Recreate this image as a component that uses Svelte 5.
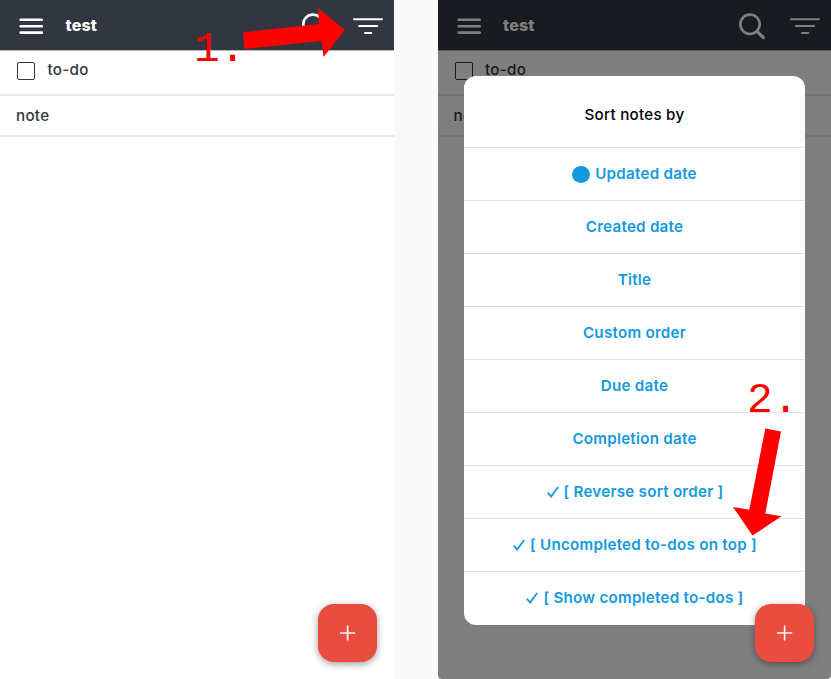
<script>
  const options = [
    { label: 'Updated date', selected: true },
    { label: 'Created date' },
    { label: 'Title' },
    { label: 'Custom order' },
    { label: 'Due date' },
    { label: 'Completion date' },
    { label: '[ Reverse sort order ]', checked: true },
    { label: '[ Uncompleted to-dos on top ]', checked: true },
    { label: '[ Show completed to-dos ]', checked: true }
  ];
</script>

{#snippet screen()}
  <header>
    <svg class="menu" width="24" height="17" viewBox="0 0 24 17">
      <path d="M1.7 1.8H22.9M1.7 8.2H22.9M1.7 14.6H22.9" stroke="#fff" stroke-width="2.6" stroke-linecap="round" />
    </svg>
    <h1>test</h1>
    <svg class="search" width="26" height="27" viewBox="0 0 26 27" fill="none" stroke="#fff">
      <circle cx="11" cy="11.3" r="9.7" stroke-width="2.6" />
      <path d="M18 18.3L24.2 24.5" stroke-width="3.2" stroke-linecap="round" />
    </svg>
    <svg class="filter" width="30" height="18" viewBox="0 0 30 18">
      <path d="M1 2.3H29M6 9.1H24.2M12 16.1H18.3" stroke="#fff" stroke-width="2" stroke-linecap="round" />
    </svg>
  </header>
  <div class="note todo"><span class="box"></span><span>to-do</span></div>
  <div class="note"><span>note</span></div>
{/snippet}

{#snippet fab()}
  <button class="fab" aria-label="Add">
    <svg width="16" height="16" viewBox="0 0 16 16"><path d="M7.6 .4V15.6M0 8H15.2" stroke="#fff" stroke-width="1.6" /></svg>
  </button>
{/snippet}

<main>
  <section class="phone">
    {@render screen()}
    {@render fab()}
  </section>
  <section class="phone second">
    {@render screen()}
    <div class="overlay">
      <div class="dialog">
        <h2>Sort notes by</h2>
        {#each options as option}
          <div class="option">
            {#if option.selected}<i class="dot"></i>{/if}
            {#if option.checked}
              <svg class="check" width="12" height="12" viewBox="0 0 12 12" fill="none"><path d="M.8 6.7L4.1 10.6L11.2 1" stroke="currentColor" stroke-width="1.8" /></svg>
            {/if}
            <span>{option.label}</span>
          </div>
        {/each}
      </div>
    </div>
    {@render fab()}
  </section>

  <svg class="arrows" width="831" height="679" viewBox="0 0 831 679" fill="#f00">
    <path d="M243 32.3L319 24L318 8L345 30L323.5 57L321.5 41L244.5 49Z" />
    <path d="M765.3 428.5L781 431.5L765.3 513.5L781.5 516.3L752.5 535.5L733 507L749.3 509.7Z" />
  </svg>
  <span class="step one">1.</span>
  <span class="step two">2.</span>
</main>

<style>
  main {
    position: relative;
    display: flex;
    justify-content: space-between;
    width: 831px;
    height: 679px;
    overflow: hidden;
    background: #fafafa;
    font-family: Inter, "Liberation Sans", sans-serif;
  }
  .phone {
    position: relative;
    width: 394px;
    height: 679px;
    background: #fff;
    overflow: hidden;
  }
  .second {
    width: 393.5px;
    border-radius: 0 0 4px 4px;
  }
  header {
    display: flex;
    align-items: center;
    height: 50px;
    padding: 0 11px 0 19px;
    box-sizing: border-box;
    background: #313640;
    box-shadow: 0 1px 0 #b8babd;
  }
  .menu { margin-top: 2px; }
  h1 {
    flex: 1;
    margin: 0 0 0 22.5px;
    color: #fff;
    font-size: 16px;
    line-height: 20px;
    font-weight: 800;
    letter-spacing: .2px;
  }
  .search { margin: 2px 25px 0 0; }
  .filter { margin-top: 2px; }
  .note {
    display: flex;
    align-items: center;
    box-sizing: border-box;
    height: 41px;
    padding: 0 16px;
    border-bottom: 2px solid #e8e8e8;
    color: #32373f;
    font-size: 15.2px;
    line-height: 20px;
    font-weight: 550;
    letter-spacing: .28px;
  }
  .todo {
    height: 46px;
    align-items: flex-start;
    padding-top: 10px;
    gap: 12.5px;
  }
  .box {
    box-sizing: border-box;
    width: 18px;
    height: 18px;
    margin: 2px 0 0 1px;
    border: 1.5px solid #32373f;
    border-radius: 2px;
  }
  .overlay {
    position: absolute;
    inset: 0;
    background: rgba(0, 0, 0, .5);
  }
  .dialog {
    width: 341px;
    height: 549px;
    margin: 76px 0 0 26.5px;
    border-radius: 12px;
    background: #fff;
    overflow: hidden;
  }
  h2 {
    margin: 0;
    height: 71px;
    padding-top: 7px;
    box-sizing: border-box;
    color: #000;
    font-size: 15.2px;
    line-height: 64px;
    font-weight: 550;
    letter-spacing: .25px;
    text-align: center;
  }
  .option {
    display: flex;
    align-items: center;
    justify-content: center;
    box-sizing: border-box;
    height: 53px;
    border-top: 1px solid #e1e2e3;
    color: #1499e0;
    font-size: 15.2px;
    line-height: 20px;
    font-weight: 600;
    letter-spacing: .24px;
    white-space: nowrap;
  }
  .dot {
    width: 18px;
    height: 17px;
    margin: 1px 5px 0 0;
    border-radius: 50%;
    background: #1499e0;
  }
  .check { margin: 0 5px 0 1px; }
  .fab {
    position: absolute;
    right: 17px;
    bottom: 17px;
    display: grid;
    place-items: center;
    width: 59px;
    height: 58px;
    padding: 0;
    border: 0;
    border-radius: 16px;
    background: #e94d3f;
    box-shadow: 0 2px 7px rgba(0, 0, 0, .4);
  }
  .second .fab { right: 16.8px; }
  .arrows { position: absolute; inset: 0; }
  .step {
    position: absolute;
    color: #f00;
    font: 43px/44px "Liberation Mono", monospace;
  }
  .one { left: 194px; top: 28px; }
  .two { left: 747px; top: 379px; }
</style>
